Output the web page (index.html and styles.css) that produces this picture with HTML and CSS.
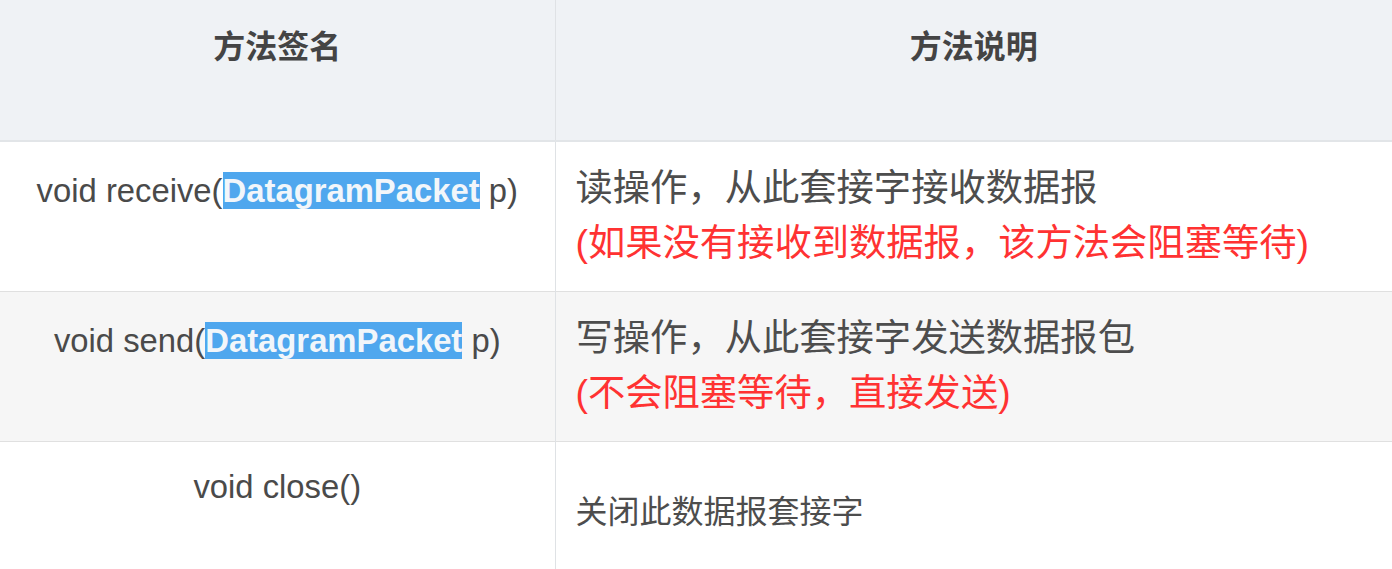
FILE: index.html
```html
<!DOCTYPE html>
<html lang="zh-CN">
<head>
<meta charset="utf-8">
<title>DatagramSocket 方法</title>
<link rel="stylesheet" href="styles.css">
</head>
<body>
<table class="api-table">
  <colgroup>
    <col class="col-sig">
    <col class="col-desc">
  </colgroup>
  <thead>
    <tr class="head-row">
      <th class="head-cell">方法签名</th>
      <th class="head-cell">方法说明</th>
    </tr>
  </thead>
  <tbody>
    <tr class="row row-tall">
      <td class="sig">void receive(<span class="hl">DatagramPacket</span> p)</td>
      <td class="desc">读操作，从此套接字接收数据报<br><span class="warn">(如果没有接收到数据报，该方法会阻塞等待)</span></td>
    </tr>
    <tr class="row row-tall row-alt">
      <td class="sig">void send(<span class="hl">DatagramPacket</span> p)</td>
      <td class="desc">写操作，从此套接字发送数据报包<br><span class="warn">(不会阻塞等待，直接发送)</span></td>
    </tr>
    <tr class="row row-last">
      <td class="sig sig-last">void close()</td>
      <td class="desc desc-small">关闭此数据报套接字</td>
    </tr>
  </tbody>
</table>
</body>
</html>
```

FILE: styles.css
```css
html, body {
  margin: 0;
  padding: 0;
  background: #ffffff;
}

body {
  font-family: "Liberation Sans", "Noto Sans CJK SC", sans-serif;
  color: #4d4d4d;
  overflow: hidden;
}

.api-table {
  width: 1392px;
  border-collapse: collapse;
  table-layout: fixed;
}

.col-sig {
  width: 555px;
}

.col-desc {
  width: 837px;
}

.head-row {
  background: #eff2f5;
}

.head-cell {
  height: 141px;
  box-sizing: border-box;
  padding: 24px 0 0;
  vertical-align: top;
  text-align: center;
  font-size: 32px;
  line-height: 40px;
  font-weight: bold;
  color: #444444;
  font-family: "Noto Sans CJK SC", sans-serif;
  border-bottom: 2px solid #e2e5e8;
}

.head-cell + .head-cell,
.desc {
  border-left: 1px solid #dfe2e5;
}

.row {
  border-bottom: 1px solid #e0e0e0;
}

.row-tall {
  height: 150px;
}

.row-alt {
  background: #f6f6f6;
}

.row-last {
  height: 142px;
  border-bottom: none;
}

.sig {
  vertical-align: top;
  text-align: center;
  padding: 29px 0 0;
  font-size: 32.8px;
  line-height: 40px;
  color: #4a4a4a;
  white-space: nowrap;
}

.sig-last {
  padding-top: 25px;
}

.hl {
  background: #4fa7ee;
  color: #f2f6fa;
  font-weight: bold;
}

.desc {
  vertical-align: middle;
  padding: 0 0 0 20px;
  font-size: 37.3px;
  line-height: 55px;
  color: #4d4d4d;
}

.desc-small {
  font-size: 32px;
  line-height: 44px;
}

.warn {
  color: #ff3232;
}
```
